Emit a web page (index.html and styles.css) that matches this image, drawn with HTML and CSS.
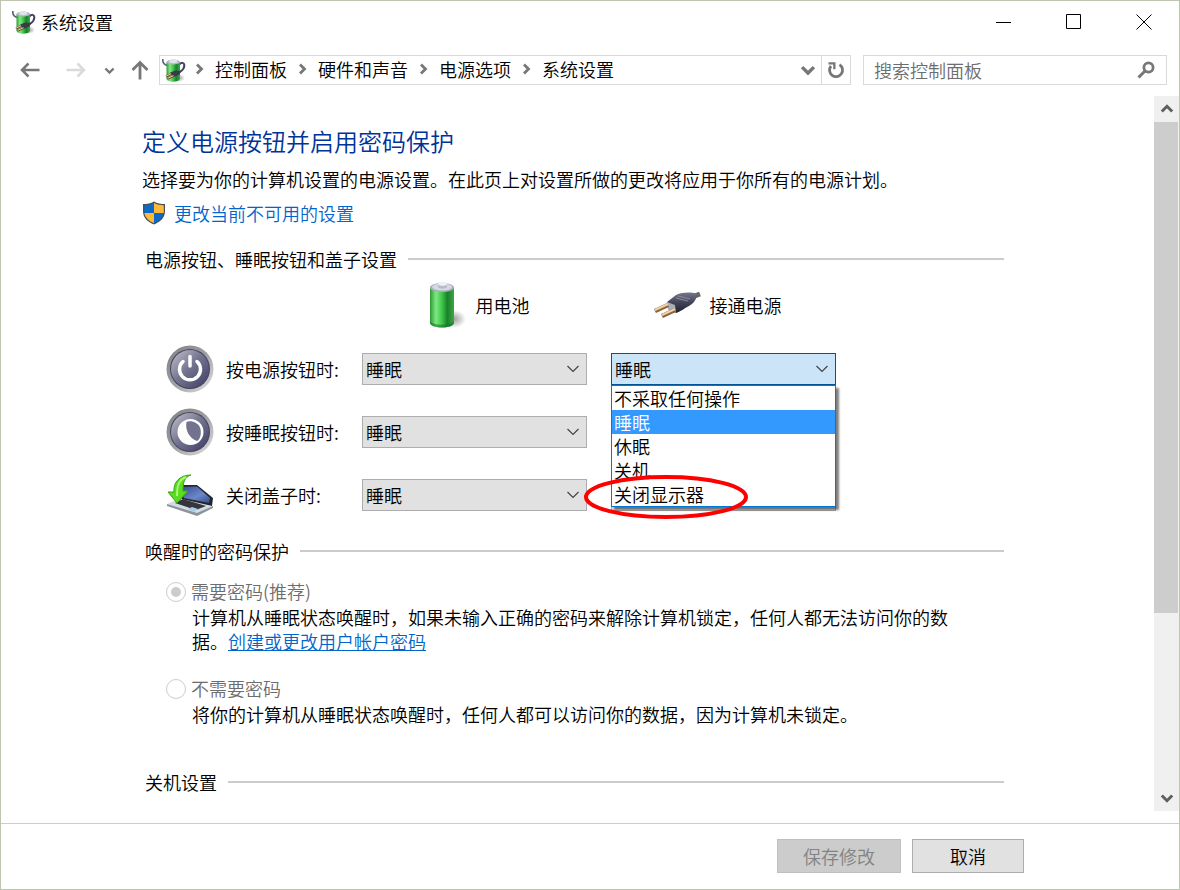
FILE: index.html
```html
<!DOCTYPE html>
<html lang="zh-CN">

<head>
    <meta charset="UTF-8">
    <meta name="viewport" content="width=device-width, initial-scale=1.0">
    <title>系统设置</title>
    <link rel="stylesheet" href="styles.css">
</head>

<body>

    <!-- shared icons -->
    <svg class="defs" width="0" height="0" aria-hidden="true">
        <defs>
            <linearGradient id="green" x1="0" x2="1" y1="0" y2="0">
                <stop offset="0" stop-color="#2f9a35" />
                <stop offset=".25" stop-color="#7fe884" />
                <stop offset=".5" stop-color="#3cc746" />
                <stop offset=".72" stop-color="#1b7f2c" />
                <stop offset="1" stop-color="#3aa845" />
            </linearGradient>
            <linearGradient id="silver" x1="0" x2="1" y1="0" y2="1">
                <stop offset="0" stop-color="#7d7e80" />
                <stop offset=".5" stop-color="#a0a0a3" />
                <stop offset="1" stop-color="#e2e2e4" />
            </linearGradient>
            <linearGradient id="face" x1="0" x2="1" y1="0" y2="1">
                <stop offset="0" stop-color="#c4c4cf" />
                <stop offset=".45" stop-color="#777793" />
                <stop offset="1" stop-color="#3c3b63" />
            </linearGradient>
            <linearGradient id="screen" x1="0" x2="1" y1="0" y2="1">
                <stop offset="0" stop-color="#30478a" />
                <stop offset=".6" stop-color="#6c88c8" />
                <stop offset="1" stop-color="#34498a" />
            </linearGradient>
            <linearGradient id="plug" x1="0" x2="0" y1="0" y2="1">
                <stop offset="0" stop-color="#747689" />
                <stop offset=".5" stop-color="#424356" />
                <stop offset="1" stop-color="#20202e" />
            </linearGradient>
            <radialGradient id="shade">
                <stop offset="0" stop-color="#777" stop-opacity=".7" />
                <stop offset="1" stop-color="#777" stop-opacity="0" />
            </radialGradient>
        </defs>
        <symbol id="power-options" viewBox="0 0 24 24">
            <ellipse cx="17" cy="20" rx="6" ry="4" fill="url(#shade)" />
            <path d="M.8 1 C.5 4 2 7 6 7.500" fill="none" stroke="#5b5e78" stroke-width="1.6" />
            <path d="M17 7 C19 4 22.500 4 22.300 8 C22 12 19 13 17 14.500" fill="none" stroke="#41435e" stroke-width="2" />
            <path d="M4.500 4 H18 V21 C17 24.500 5.500 24.500 4.500 21 Z" fill="url(#green)" />
            <ellipse cx="11.250" cy="4" rx="6.750" ry="2.600" fill="#b3bac6" />
            <path d="M7 4 C7 0 15.500 0 15.500 4 C14 5.500 8.500 5.500 7 4 Z" fill="#dfe3ea" />
            <path d="M7.500 15 L13 12.500 L19 13 L17.500 16.500 L11.500 19 Z" fill="#3a3b44" />
            <path d="M4 18.500 L9 16 M6 20.500 L11.500 18" stroke="#6b4c30" stroke-width="2.200" />
            <path d="M4 18.200 L9 15.700 M6 20.200 L11.500 17.700" stroke="#eccfa0" />
        </symbol>
        <symbol id="chevron-down" viewBox="0 0 14 14">
            <path d="M1.800 4.500 L7 9.700 L12.200 4.500" fill="none" stroke="currentColor" stroke-width="3" />
        </symbol>
        <symbol id="chevron-right" viewBox="0 0 14 14">
            <path d="M4 2.500 L8.500 7 L4 11.500" fill="none" stroke="currentColor" stroke-width="2.8" />
        </symbol>
        <symbol id="chevron-thin" viewBox="0 0 14 14">
            <path d="M1.500 4 L7 9.500 L12.500 4" fill="none" stroke="currentColor" stroke-width="1.2" />
        </symbol>
    </svg>

    <header class="titlebar">
        <svg class="icon24"><use href="#power-options" /></svg>
        <span class="title">系统设置</span>
        <button type="button" class="win-btn" aria-label="最小化">
            <svg width="16" height="16"><path d="M0 8.500 H15" stroke="#000" /></svg>
        </button>
        <button type="button" class="win-btn" aria-label="最大化">
            <svg width="16" height="16"><path d="M.5 .5 H14.500 V14.500 H.5 Z" stroke="#000" fill="none" /></svg>
        </button>
        <button type="button" class="win-btn" aria-label="关闭">
            <svg width="16" height="16"><path d="M.5 .5 L15.500 15.500 M15.500 .5 L.5 15.500" stroke="#000" /></svg>
        </button>
    </header>

    <nav class="navbar">
        <button type="button" class="nav-btn" aria-label="后退">
            <svg width="20" height="16"><path d="M19.500 8 H2 M8.500 1.500 L2 8 L8.500 14.500" fill="none" stroke="#777" stroke-width="2.500" /></svg>
        </button>
        <button type="button" class="nav-btn" aria-label="前进">
            <svg width="20" height="16"><path d="M.5 8 H18 M11.500 1.500 L18 8 L11.500 14.500" fill="none" stroke="#dadada" stroke-width="2.500" /></svg>
        </button>
        <button type="button" class="nav-btn recent" aria-label="最近浏览的位置">
            <svg width="11" height="11"><use href="#chevron-down" /></svg>
        </button>
        <button type="button" class="nav-btn up" aria-label="上移">
            <svg width="18" height="20"><path d="M9 19.500 V3 M1.500 10 L9 2.500 L16.500 10" fill="none" stroke="#777" stroke-width="2.800" /></svg>
        </button>

        <div class="address">
            <svg class="icon24"><use href="#power-options" /></svg>
            <ol class="crumbs">
                <li><svg class="sep"><use href="#chevron-right" /></svg><a href="#">控制面板</a></li>
                <li><svg class="sep"><use href="#chevron-right" /></svg><a href="#">硬件和声音</a></li>
                <li><svg class="sep"><use href="#chevron-right" /></svg><a href="#">电源选项</a></li>
                <li><svg class="sep"><use href="#chevron-right" /></svg><a href="#">系统设置</a></li>
            </ol>
            <button type="button" class="addr-btn" aria-label="历史记录">
                <svg width="16" height="16"><use href="#chevron-down" /></svg>
            </button>
            <button type="button" class="addr-btn refresh" aria-label="刷新">
                <svg width="18" height="18" viewBox="0 0 18 18">
                    <path d="M12.500 3.600 A6.500 6.500 0 1 1 4 5" fill="none" stroke="#777" stroke-width="2.800" />
                    <path d="M1.500 1.200 H8.500 V8.200 L6.200 8.200 V3.500 H1.500 Z" fill="#777" />
                </svg>
            </button>
        </div>

        <div class="search">
            <input type="search" placeholder="搜索控制面板" aria-label="搜索控制面板">
            <svg width="18" height="18" viewBox="0 0 18 18">
                <circle cx="11.500" cy="6.500" r="4.600" fill="none" stroke="#777" stroke-width="2.800" />
                <path d="M8 10 L1.500 16.500" stroke="#777" stroke-width="3" />
            </svg>
        </div>
    </nav>

    <main class="viewport">
        <div class="content">
            <h1>定义电源按钮并启用密码保护</h1>
            <p class="intro">选择要为你的计算机设置的电源设置。在此页上对设置所做的更改将应用于你所有的电源计划。</p>
            <a href="#" class="admin-link">
                <svg width="24" height="24" viewBox="0 0 24 24">
                    <path d="M12 .5 C9 2.500 5 3 1 3 V10 C1 17 6 21 12 23.500 C18 21 23 17 23 10 V3 C19 3 15 2.500 12 .5 Z" fill="#4a4d51" />
                    <path d="M12 2 C9 3.700 6 4.200 2.200 4.200 V12 H12 Z" fill="#0b6ac6" />
                    <path d="M12 2 C15 3.700 18 4.200 21.800 4.200 V12 H12 Z" fill="#ffb935" />
                    <path d="M2.400 12 C3.200 17 7 20 12 22.200 V12 Z" fill="#ffb935" />
                    <path d="M21.600 12 C20.800 17 17 20 12 22.200 V12 Z" fill="#0b6ac6" />
                </svg>
                更改当前不可用的设置
            </a>

            <h2>电源按钮、睡眠按钮和盖子设置</h2>
            <div class="settings">
                <div class="col-head battery">
                    <svg width="48" height="48" viewBox="0 0 48 48">
                        <ellipse cx="34" cy="38" rx="12" ry="9" fill="url(#shade)" />
                        <path d="M10 6 H34 V42 C33 48 11 48 10 42 Z" fill="url(#green)" />
                        <path d="M10 40 C12 45 32 45 34 40 V42 C33 48 11 48 10 42 Z" fill="#15772a" opacity=".6" />
                        <ellipse cx="22" cy="6.500" rx="12" ry="4.500" fill="#a8b0bd" />
                        <ellipse cx="22" cy="6" rx="10" ry="3.500" fill="#d5d9e3" />
                        <path d="M18 3 V6 C19 8 26 8 27 6 V3 Z" fill="#b9bac9" />
                        <ellipse cx="22.500" cy="2.800" rx="4.500" ry="2" fill="#eef0f6" />
                    </svg>
                    用电池
                </div>
                <div class="col-head plugged">
                    <svg width="48" height="48" viewBox="0 0 48 48">
                        <path d="M38 16 L46 13" stroke="#65675f" stroke-width="5" />
                        <path d="M13 21 L22 14 C29 11 37 11 43 13 C43 18 39 23 35 25 C31 27 26 31 22 32 L14 28 Z" fill="url(#plug)" />
                        <path d="M13 21 L21 24 L22 32 L14 28 Z" fill="#a9aaba" />
                        <path d="M1 30 L14 24 M8 35 L21 29" stroke="#8b6140" stroke-width="4.500" />
                        <path d="M1 29 L14 23 M8 34 L21 28" stroke="#f0d2a2" stroke-width="2.400" />
                        <path d="M22 17 L34 20 M24 15 L36 18" stroke="#8b8d9d" />
                    </svg>
                    接通电源
                </div>

                <div class="row-head">
                    <svg width="48" height="48" viewBox="0 0 48 48">
                        <circle cx="24" cy="24" r="23.500" fill="url(#silver)" />
                        <circle cx="24" cy="24" r="20" fill="#45445f" />
                        <circle cx="24" cy="24" r="19" fill="url(#face)" />
                        <path d="M17 16.500 A10.500 10.500 0 1 0 31 16.500" fill="none" stroke="#fff" stroke-width="3.500" stroke-linecap="round" />
                        <path d="M24 11.500 V21" stroke="#fff" stroke-width="3.500" stroke-linecap="round" />
                    </svg>
                    <span>按电源按钮时:</span>
                </div>
                <div class="combo">
                    <select aria-label="用电池,按电源按钮时"><option>睡眠</option></select>
                    <svg class="arrow"><use href="#chevron-thin" /></svg>
                </div>
                <div class="combo open">
                    <select aria-label="接通电源,按电源按钮时"><option>睡眠</option></select>
                    <svg class="arrow"><use href="#chevron-thin" /></svg>
                    <ul class="list" role="listbox">
                        <li role="option">不采取任何操作</li>
                        <li role="option" class="selected" aria-selected="true">睡眠</li>
                        <li role="option">休眠</li>
                        <li role="option">关机</li>
                        <li role="option">关闭显示器</li>
                    </ul>
                    <svg class="mark" width="166" height="46"><ellipse cx="83" cy="23" rx="80" ry="20" fill="none" stroke="#f00" stroke-width="4" /></svg>
                </div>

                <div class="row-head">
                    <svg width="48" height="48" viewBox="0 0 48 48">
                        <circle cx="24" cy="24" r="23.500" fill="url(#silver)" />
                        <circle cx="24" cy="24" r="20" fill="#45445f" />
                        <circle cx="24" cy="24" r="19" fill="url(#face)" />
                        <circle cx="24.500" cy="24" r="13" fill="#fff" />
                        <path d="M20.500 14 C24 12 33 14 34.500 21 C35.500 27 34 31 31 33 C23 30 19 22 20.500 14 Z" fill="#73728f" />
                    </svg>
                    <span>按睡眠按钮时:</span>
                </div>
                <div class="combo">
                    <select aria-label="用电池,按睡眠按钮时"><option>睡眠</option></select>
                    <svg class="arrow"><use href="#chevron-thin" /></svg>
                </div>
                <div class="combo">
                    <select aria-label="接通电源,按睡眠按钮时"></select>
                </div>

                <div class="row-head">
                    <svg width="48" height="48" viewBox="0 0 48 48">
                        <path d="M1 33 L17 26 L47 36 L31 43 Z" fill="#d3dbe3" />
                        <path d="M1 33 L31 42 L47 35 V37 L31 45 L1 35 Z" fill="#8d939b" />
                        <path d="M9 32 L17 28 L40 35 L30 39 Z" fill="#34363c" />
                        <path d="M22 38 L26 36 L32 38 L28 41 Z" fill="#a8cbe8" />
                        <path d="M9 14 L31 14 L47 27 L46 35 L16 28 Z" fill="#23252c" />
                        <path d="M12 16 L31 15.500 L44 27 L43 32 L18 27 Z" fill="url(#screen)" />
                        <path d="M25 4 C18 6 17 12 17 20 L22 20 L11 32 L2 21 L8 21 C7 12 13 4 25 4 Z" fill="#5bdd1e" stroke="#37a60e" />
                        <path d="M20 6 C12 9 11 16 11 25" fill="none" stroke="#a8f77b" stroke-width="2" />
                    </svg>
                    <span>关闭盖子时:</span>
                </div>
                <div class="combo">
                    <select aria-label="用电池,关闭盖子时"><option>睡眠</option></select>
                    <svg class="arrow"><use href="#chevron-thin" /></svg>
                </div>
                <div class="combo">
                    <select aria-label="接通电源,关闭盖子时"></select>
                </div>
            </div>

            <h2>唤醒时的密码保护</h2>
            <div class="choice">
                <input type="radio" name="password" id="need" checked disabled>
                <label for="need">需要密码(推荐)</label>
                <p>计算机从睡眠状态唤醒时，如果未输入正确的密码来解除计算机锁定，任何人都无法访问你的数据。<a href="#">创建或更改用户帐户密码</a></p>
            </div>
            <div class="choice">
                <input type="radio" name="password" id="noneed" disabled>
                <label for="noneed">不需要密码</label>
                <p>将你的计算机从睡眠状态唤醒时，任何人都可以访问你的数据，因为计算机未锁定。</p>
            </div>

            <h2 class="last">关机设置</h2>
        </div>

        <div class="scrollbar">
            <button type="button" aria-label="向上滚动">
                <svg class="flip" width="14" height="14"><use href="#chevron-down" /></svg>
            </button>
            <div class="track">
                <div class="thumb"></div>
            </div>
            <button type="button" aria-label="向下滚动">
                <svg width="14" height="14"><use href="#chevron-down" /></svg>
            </button>
        </div>
    </main>

    <footer class="actions">
        <button type="button" class="save" disabled>保存修改</button>
        <button type="button" class="cancel">取消</button>
    </footer>

</body>

</html>
```
FILE: styles.css
```css
* {
    box-sizing: border-box;
}

body {
    display: flex;
    flex-direction: column;
    height: 100vh;
    margin: 0;
    border: 1px solid #bcc6b0;
    background: #fff;
    color: #000;
    font-family: "Noto Sans CJK SC", sans-serif;
    font-size: 18px;
    font-weight: 350;
    line-height: 24px;
    overflow: hidden;
}

button,
input,
select {
    font: inherit;
    color: inherit;
}

button {
    display: flex;
    align-items: center;
    justify-content: center;
    padding: 0;
    border: none;
    background: none;
}

svg {
    flex: none;
}

.defs {
    position: absolute;
}

.icon24 {
    width: 24px;
    height: 24px;
}

/* title bar */
.titlebar {
    display: flex;
    align-items: center;
    height: 42px;
    padding-left: 11px;
}

.title {
    flex: 1;
    margin-left: 5px;
}

.win-btn {
    width: 70px;
    height: 42px;
}

/* navigation */
.navbar {
    display: flex;
    align-items: center;
    height: 30px;
    margin: 12px 12px 11px 6px;
    color: #777;
}

.nav-btn {
    width: 46px;
    height: 30px;
}

.nav-btn.recent {
    width: 21px;
}

.nav-btn.up {
    width: 39px;
}

.address {
    display: flex;
    flex: 1;
    align-items: center;
    height: 30px;
    padding-left: 2px;
    border: 1px solid #d9d9d9;
}

.crumbs {
    display: flex;
    flex: 1;
    margin: 0 0 2px -2px;
    padding: 0;
    list-style: none;
}

.crumbs li {
    display: flex;
    align-items: center;
}

.crumbs a {
    color: #000;
    text-decoration: none;
}

.sep {
    width: 14px;
    height: 14px;
    margin: 0 8px 0 9px;
}

.addr-btn {
    width: 26px;
    height: 28px;
}

.addr-btn.refresh {
    width: 29px;
    border-left: 1px solid #d9d9d9;
}

.search {
    display: flex;
    align-items: center;
    width: 304px;
    height: 30px;
    margin-left: 12px;
    padding: 0 11px 0 10px;
    border: 1px solid #d9d9d9;
}

.search input {
    flex: 1;
    min-width: 0;
    height: 28px;
    padding: 0;
    border: none;
    outline: none;
    background: none;
}

.search input::placeholder {
    color: #6d6d6d;
}

/* page */
.viewport {
    display: flex;
    flex: 1;
    min-height: 0;
    margin-bottom: 12px;
}

.content {
    flex: 1;
    padding: 29px 150px 0 141px;
    overflow: hidden;
}

h1 {
    margin: 0 0 10px;
    color: #003399;
    font-size: 24px;
    font-weight: 350;
    line-height: 32px;
}

.intro {
    margin: 0 0 10px;
}

.admin-link {
    display: flex;
    align-items: center;
    gap: 8px;
    width: fit-content;
    color: #0066cc;
    text-decoration: none;
}

h2 {
    display: flex;
    align-items: center;
    gap: 11px;
    margin: 22px 0 0 3px;
    font-size: 18px;
    font-weight: 350;
    line-height: 24px;
}

h2::after {
    content: "";
    flex: 1;
    height: 2px;
    background: #ccc;
}

.settings {
    display: grid;
    grid-template-columns: 172px 225px 225px;
    grid-template-rows: 56px;
    grid-auto-rows: 63px;
    column-gap: 24px;
    align-items: center;
    margin: 10px 0 -9px 24px;
}

.col-head {
    display: flex;
    align-items: center;
    align-self: start;
    justify-content: center;
    gap: 8px;
}

.battery {
    grid-column: 2;
}

.plugged {
    padding-right: 12px;
}

.row-head {
    display: flex;
    align-items: center;
    gap: 12px;
    white-space: nowrap;
}

.combo {
    position: relative;
    height: 32px;
}

.combo select {
    width: 100%;
    height: 32px;
    padding: 0 3px;
    border: 1px solid #adadad;
    border-radius: 0;
    background: #e1e1e1;
    appearance: none;
}

.arrow {
    position: absolute;
    top: 9px;
    right: 7px;
    width: 14px;
    height: 14px;
    color: #444;
    pointer-events: none;
}

.combo.open {
    z-index: 1;
}

.combo.open select {
    border-color: #005499;
    background: #cce4f7;
}

.list {
    position: absolute;
    top: 32px;
    left: 0;
    width: 100%;
    margin: 0;
    padding: 0;
    border: 1px solid #0078d7;
    background: #fff;
    box-shadow: 3px 3px 2px rgba(0, 0, 0, 0.5);
    list-style: none;
}

.list li {
    padding-left: 2px;
}

.list .selected {
    background: #3399ff;
    color: #fff;
}

.mark {
    position: absolute;
    top: 121px;
    left: -28px;
}

/* password choices */
.choice {
    display: grid;
    grid-template-columns: 25px 1fr;
    align-items: center;
    margin: 16px 40px 23px 24px;
}

.choice input {
    display: grid;
    place-content: center;
    width: 20px;
    height: 20px;
    margin: 2px 0 0;
    border: 1px solid #ccc;
    border-radius: 50%;
    background: #fff;
    appearance: none;
}

.choice input:checked::before {
    content: "";
    width: 10px;
    height: 10px;
    border-radius: 50%;
    background: #ccc;
}

.choice label {
    color: #6d6d6d;
}

.choice p {
    grid-column: 2;
    margin: 2px 0 0 1px;
}

.choice a {
    color: #0066cc;
}

h2.last {
    margin-top: 44px;
}

/* scroll bar */
.scrollbar {
    display: flex;
    flex-direction: column;
    width: 25px;
    background: #f0f0f0;
    color: #606060;
}

.scrollbar button {
    width: 25px;
    height: 26px;
}

.flip {
    transform: rotate(180deg);
}

.track {
    flex: 1;
}

.thumb {
    width: 24px;
    height: 74%;
    background: #cdcdcd;
}

/* bottom buttons */
.actions {
    display: flex;
    justify-content: flex-end;
    gap: 11px;
    padding: 15px 155px 16px 0;
    border-top: 1px solid #ccc;
}

.actions button {
    height: 34px;
    border: 1px solid #adadad;
    background: #e1e1e1;
}

.actions .save {
    width: 124px;
    border-color: #bfbfbf;
    background: #ccc;
    color: #838383;
}

.actions .cancel {
    width: 112px;
}
```
